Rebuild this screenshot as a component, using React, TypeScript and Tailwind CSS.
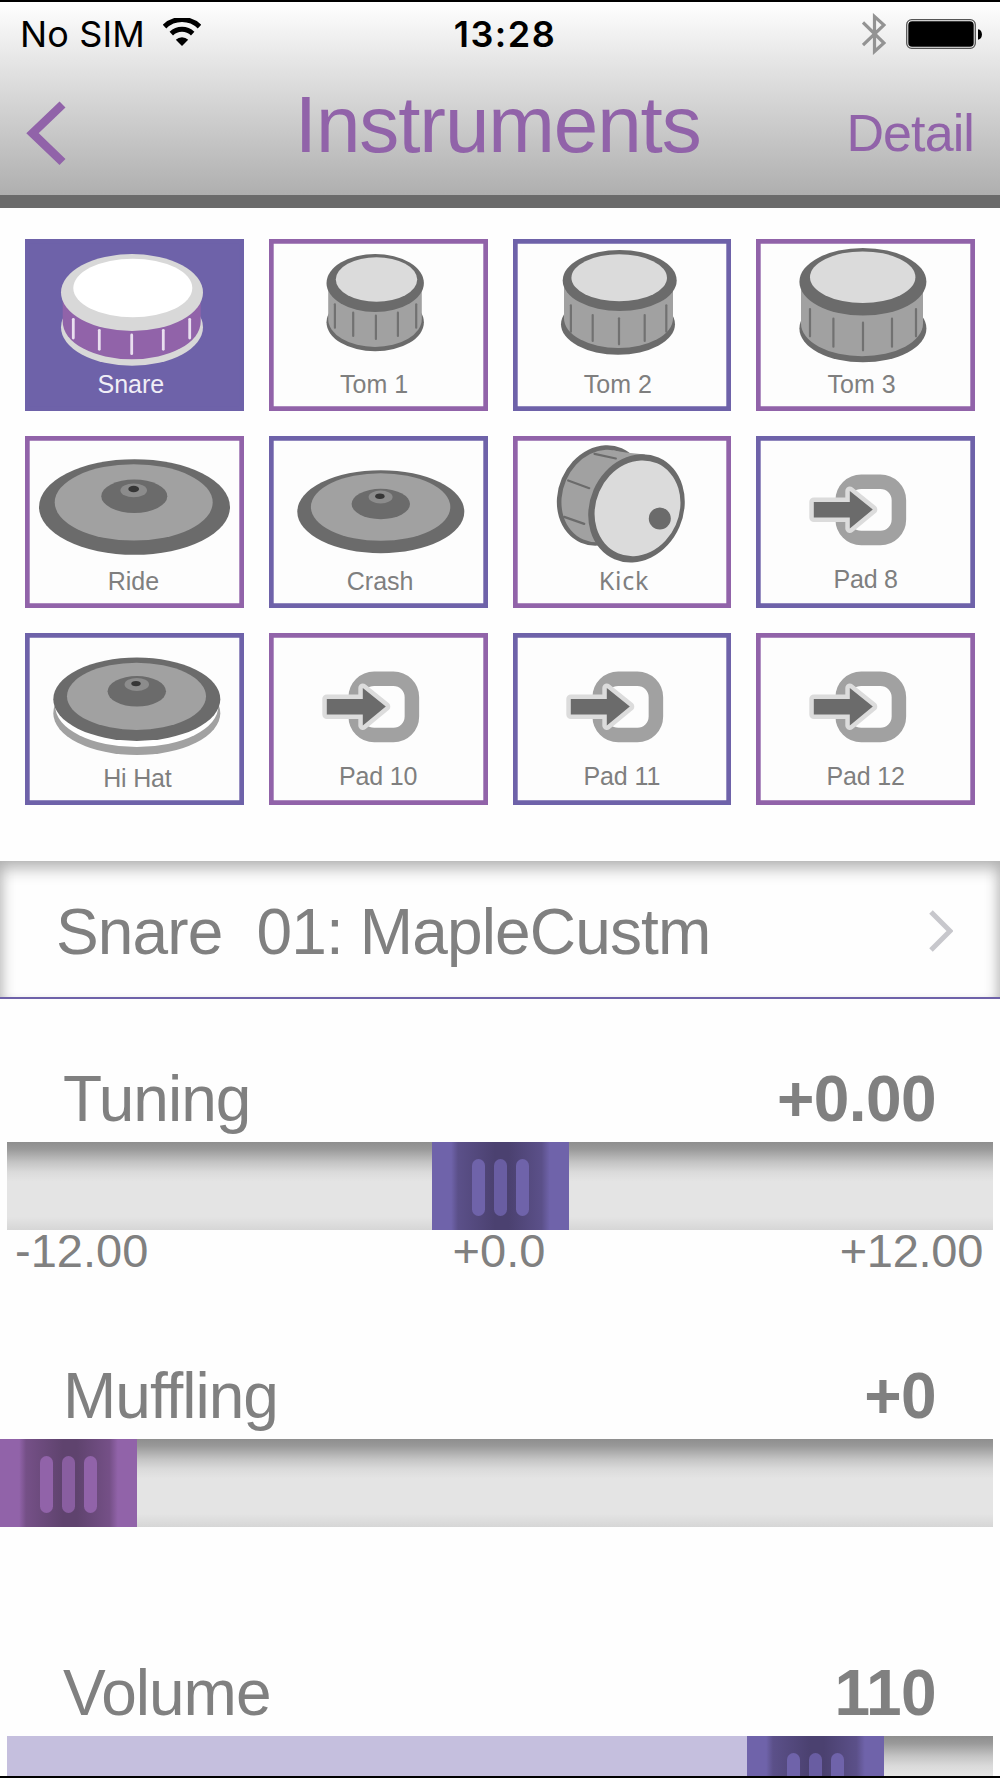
import clsx from "clsx";
import type { ReactNode } from "react";

type Ring = [cx: number, cy: number, rx: number, ry: number];

interface DrumProps {
	head: Ring;
	skin: Ring;
	foot: Ring;
	shell: [left: number, right: number, bottom: number];
	lugs: [x: number, y1: number, y2: number][];
	active?: boolean;
}

function Oval({ ring, fill }: { ring: Ring; fill: string }) {
	const [cx, cy, rx, ry] = ring;
	return <ellipse cx={cx} cy={cy} rx={rx} ry={ry} fill={fill} />;
}

function Drum({ head, skin, foot, shell, lugs, active }: DrumProps) {
	const [left, right, bottom] = shell;
	const rx = (right - left) / 2;
	const ry = head[3] - 1;
	const cy = bottom - ry;
	const rim = active ? "#d8d8d8" : "#6b6b6b";
	return (
		<>
			<Oval ring={foot} fill={rim} />
			<path
				d={`M${left} ${head[1]}V${cy}A${rx} ${ry} 0 0 0 ${right} ${cy}V${head[1]}Z`}
				fill={active ? "#9163a9" : "#a1a1a1"}
			/>
			{lugs.map(([x, y1, y2]) => (
				<path
					key={x}
					d={`M${x} ${y1 + 1}V${y2 - 1}`}
					stroke={active ? "#e9dfef" : "#717171"}
					strokeWidth={active ? 2.8 : 2.2}
					strokeLinecap="round"
				/>
			))}
			<Oval ring={head} fill={rim} />
			<Oval ring={skin} fill={active ? "#ffffff" : "#dbdbdb"} />
		</>
	);
}

function Cymbal({ rings }: { rings: Ring[] }) {
	const fills = ["#6b6b6b", "#a1a1a1", "#6b6b6b", "#8c8c8c", "#363636"];
	return (
		<>
			{rings.map((ring, i) => (
				<Oval key={fills[i] + i} ring={ring} fill={fills[i]} />
			))}
		</>
	);
}

function Kick() {
	return (
		<>
			<ellipse cx="88.3" cy="59.4" rx="43" ry="51.5" transform="rotate(23.5 88.3 59.4)" fill="#6b6b6b" />
			<ellipse cx="89.3" cy="60" rx="39.5" ry="47.5" transform="rotate(23.5 89.3 60)" fill="#a1a1a1" />
			<path d="M100 14.5L113 16.5L132 18.5L110 100L86 106Z" fill="#a1a1a1" />
			<path
				d="M81.5 17.9L102.8 22.5M55.2 44.5L76.2 52.2M51.2 80.9L71.2 87.9"
				stroke="#6b6b6b"
				strokeWidth="2.2"
				strokeLinecap="round"
			/>
			<ellipse cx="123.5" cy="72.4" rx="46.8" ry="55.4" transform="rotate(23.5 123.5 72.4)" fill="#6b6b6b" />
			<ellipse cx="124.5" cy="72.3" rx="41.7" ry="49" transform="rotate(23.5 124.5 72.3)" fill="#dbdbdb" />
			<circle cx="146.8" cy="82.5" r="11" fill="#6b6b6b" />
		</>
	);
}

function Pad() {
	const arrow = "M57.8 66H93.8V55L116.8 73.6L93.8 92.4V81.6H57.8Z";
	return (
		<>
			<rect x="86.7" y="45.8" width="56.2" height="56.2" rx="18.5" fill="none" stroke="#a1a1a1" strokeWidth="14.5" />
			<path d={arrow} fill="#dcdcdc" stroke="#dcdcdc" strokeWidth="9" strokeLinejoin="round" />
			<path d={arrow} fill="#6b6b6b" />
		</>
	);
}

const instruments: { name: string; label: string; art: ReactNode }[] = [
	{
		name: "Snare",
		label: "pr-[7px]",
		art: (
			<Drum
				active
				head={[107, 53.5, 71, 38.5]}
				skin={[107.8, 49, 59.5, 29.3]}
				foot={[107, 88.2, 71, 38.5]}
				shell={[37.7, 175.7, 120.3]}
				lugs={[
					[48.3, 79.3, 100],
					[74.3, 90.3, 111.3],
					[106.7, 95, 115.7],
					[138.3, 90.3, 111.3],
					[164.7, 79.3, 100],
				]}
			/>
		),
	},
	{
		name: "Tom 1",
		label: "pr-[8px]",
		art: (
			<Drum
				head={[106.2, 44, 48.7, 29]}
				skin={[107.5, 40.5, 40.7, 22.2]}
				foot={[106.2, 83.3, 48.7, 29]}
				shell={[59.2, 152.8, 108]}
				lugs={[
					[65.9, 64.3, 89.7],
					[84.2, 72.7, 98],
					[106.9, 75.7, 101],
					[128.9, 72.7, 98],
					[147.2, 64.3, 89.7],
				]}
			/>
		),
	},
	{
		name: "Tom 2",
		label: "pr-[8px]",
		art: (
			<Drum
				head={[106.7, 41.5, 57, 30.5]}
				skin={[106.2, 38.8, 47.8, 23.5]}
				foot={[105, 85.2, 57, 30.5]}
				shell={[51, 160, 109]}
				lugs={[
					[57.9, 65.3, 93.7],
					[79.7, 75, 103],
					[106, 78.3, 106.3],
					[131.7, 75, 103],
					[153.3, 65.3, 93.7],
				]}
			/>
		),
	},
	{
		name: "Tom 3",
		label: "pr-[8px]",
		art: (
			<Drum
				head={[106.9, 42.8, 63.5, 33.8]}
				skin={[106.7, 38.2, 52.7, 25.8]}
				foot={[106.9, 89.5, 63.5, 33.8]}
				shell={[45, 167, 117.3]}
				lugs={[
					[54, 69, 98.3],
					[77.4, 78.7, 108.7],
					[107, 82.7, 112.3],
					[136, 78.7, 108.7],
					[160, 69, 98.3],
				]}
			/>
		),
	},
	{
		name: "Ride",
		label: "pr-[2px]",
		art: (
			<Cymbal
				rings={[
					[109.5, 71, 95.5, 47.8],
					[108.7, 66.4, 79, 38.2],
					[109.3, 60.2, 33, 16.7],
					[108.7, 54.4, 13.3, 6.8],
					[108.7, 53, 5.4, 3.2],
				]}
			/>
		),
	},
	{
		name: "Crash",
		label: "pl-[4px]",
		art: (
			<Cymbal
				rings={[
					[111.8, 75.7, 83.5, 41.5],
					[111.6, 71, 69.7, 33.8],
					[111.8, 68, 29.2, 15.2],
					[111.6, 61, 12, 6.5],
					[110.9, 60.2, 4.7, 2.7],
				]}
			/>
		),
	},
	{
		name: "Kick",
		label: "-mt-[1px] pl-[4px] font-['Noto_Sans',sans-serif] tracking-[0.8px]",
		art: <Kick />,
	},
	{ name: "Pad 8", label: "-mt-[2px] tracking-[-0.2px]", art: <Pad /> },
	{
		name: "Hi Hat",
		label: "pl-[6px] tracking-[-0.2px]",
		art: (
			<>
				<Oval ring={[111.8, 80.2, 83.5, 41.8]} fill="#a1a1a1" />
				<Oval ring={[111.8, 73.5, 81.5, 40.5]} fill="#ffffff" />
				<Cymbal
					rings={[
						[111.8, 66.2, 83.5, 41.7],
						[111.5, 63.3, 69.5, 33.6],
						[111.8, 58.3, 29.2, 15.3],
						[111.8, 51.4, 12.2, 6.5],
						[111, 50.6, 4.7, 2.7],
					]}
				/>
			</>
		),
	},
	{ name: "Pad 10", label: "-mt-[2px] tracking-[-0.2px]", art: <Pad /> },
	{ name: "Pad 11", label: "-mt-[2px] tracking-[-0.1px]", art: <Pad /> },
	{ name: "Pad 12", label: "-mt-[2px] tracking-[-0.2px]", art: <Pad /> },
];

function Tile({ index, selected }: { index: number; selected: boolean }) {
	const { name, label, art } = instruments[index];
	// border colours alternate like a checkerboard
	const violet = (index + Math.floor(index / 4)) % 2 === 0;
	return (
		<button
			type="button"
			className={clsx(
				"flex flex-col",
				selected ? "bg-[#6e62a9]" : "bg-[#fdfdfd]",
				violet
					? "shadow-[inset_0_0_0_4.7px_#6e62a9]"
					: "shadow-[inset_0_0_0_4.7px_#9163a9]",
			)}
		>
			<svg viewBox="0 0 218.75 130" className="h-[130px] w-full shrink-0">
				{art}
			</svg>
			<span
				className={clsx(
					"w-full text-center text-[25px] leading-[31px]",
					selected ? "text-[#f0eef6]" : "text-[#7f7f7f]",
					label,
				)}
			>
				{name}
			</span>
		</button>
	);
}

function Header() {
	return (
		<header className="h-[208px] border-t-2 border-b-[13px] border-t-black border-b-[#6b6b6b] bg-linear-to-b from-white via-[#d6d6d6] via-50% to-[#afafaf]">
			<div className="grid h-[64px] grid-cols-3 items-center pr-[17px] pl-[20px] font-[Inter,sans-serif] text-[36px] text-black">
				<div className="flex items-center gap-[18px]">
					<span className="tracking-[0.15px]">No SIM</span>
					<svg viewBox="0 0 38 28" className="mb-[4px] h-[28px] w-[38px]" fill="none" stroke="#000">
						<path d="M1.5 8.6A25 25 0 0 1 36.5 8.6" strokeWidth="5" />
						<path d="M8.3 15.6A15.6 15.6 0 0 1 29.7 15.6" strokeWidth="5" />
						<path d="M19 28L12.8 21.8A8.8 8.8 0 0 1 25.2 21.8Z" fill="#000" stroke="none" />
					</svg>
				</div>
				<span className="pl-[7px] text-center font-semibold tracking-[1.5px]">13:28</span>
				<div className="flex items-center justify-end">
					<svg viewBox="0 0 24 42" className="mr-[20px] h-[42px] w-[24px]" fill="none" stroke="#939393" strokeWidth="3.2">
						<path d="M1 9.5L22 30L12.5 38.5V3.5L22 12L1 32" />
					</svg>
					<svg viewBox="0 0 77 30" className="h-[30px] w-[77px]">
						<rect x="0.7" y="0.7" width="68.6" height="28.6" rx="5" fill="none" stroke="#555" strokeWidth="1.3" />
						<rect x="2.3" y="2.3" width="65.4" height="25.4" rx="3.8" fill="#000" />
						<path d="M72 10.3C77.3 11 77.3 20 72 20.7Z" fill="#000" />
					</svg>
				</div>
			</div>
			<div className="flex h-[129px] items-start justify-between pr-[26px] pl-[26px] text-[#9163a9]">
				<svg viewBox="0 0 40 66" className="mt-[34px] mr-[83px] h-[66px] w-[40px]">
					<path d="M36.5 4.5L6.5 33.2L36.5 62" fill="none" stroke="currentColor" strokeWidth="8.6" />
				</svg>
				<h1 className="text-[80px] leading-[118px] tracking-[-1.1px]">Instruments</h1>
				<button type="button" className="text-[52px] leading-[135px] tracking-[-0.9px]">
					Detail
				</button>
			</div>
		</header>
	);
}

interface SliderProps {
	name: string;
	value: string;
	thumb: number;
	filled?: boolean;
	violet?: boolean;
	scale?: string[];
}

function Slider({ name, value, thumb, filled, violet, scale }: SliderProps) {
	return (
		<section className="h-[297px] shrink-0">
			<div className="flex justify-between pt-[58px] pr-[64px] pl-[63px] text-[64px] leading-[85px]">
				<span className="tracking-[-1px]">{name}</span>
				<span className="text-[64px] leading-[84px] font-bold tracking-[-0.6px]">{value}</span>
			</div>
			<div className="relative mx-[7px] h-[88px] bg-[linear-gradient(#8e8e8e,#999_8%,#c4c4c4_23%,#dadada_34%,#e4e4e4_45%,#e4e4e4_85%,#d6d6d6)]">
				{filled && (
					<div className="h-full bg-[#c5bfde]" style={{ width: thumb }} />
				)}
				<div
					className={clsx(
						"absolute top-0 flex h-full w-[137px] items-center justify-center gap-[9px]",
						violet
							? "bg-[linear-gradient(90deg,#6f63aa_14%,#5b5089_19%,#4b4170_46%,#4b4170_56%,#5b5089_80%,#6f63aa_86%)]"
							: "bg-[linear-gradient(90deg,#9163a9_14%,#755087_19%,#5f436e_46%,#5f436e_56%,#755087_80%,#9163a9_86%)]",
					)}
					style={{ left: thumb }}
				>
					{[0, 1, 2].map((i) => (
						<i
							key={i}
							className={clsx(
								"mt-[3px] h-[57px] w-[13px] rounded-full",
								violet ? "bg-[#6f63aa]" : "bg-[#9163a9]",
								i === 1 && "opacity-85",
							)}
						/>
					))}
				</div>
			</div>
			{scale && (
				<div className="grid grid-cols-3 pr-[17px] pl-[15px] text-[47px] leading-[42px]">
					<span>{scale[0]}</span>
					<span className="text-center">{scale[1]}</span>
					<span className="text-right tracking-[-0.3px]">{scale[2]}</span>
				</div>
			)}
		</section>
	);
}

export default function App() {
	return (
		<main className="flex h-[1778px] w-[1000px] flex-col overflow-hidden border-b-2 border-black bg-[#fefefe] font-['Liberation_Sans',Arial,sans-serif] text-[#808080]">
			<Header />
			<div className="grid h-[653px] shrink-0 auto-rows-[171.875px] grid-cols-4 gap-[25px] px-[25px] pt-[31px]">
				{instruments.map((item, i) => (
					<Tile key={item.name} index={i} selected={i === 0} />
				))}
			</div>
			<button
				type="button"
				className="flex h-[138px] shrink-0 items-start justify-between border-b-[2.5px] border-[#6e62a9] bg-[#fefefe] pr-[47px] pl-[56px] shadow-[inset_0_17px_16px_-10px_#b0b0b0,inset_12px_0_14px_-10px_#b8b8b8,inset_-12px_0_14px_-10px_#b8b8b8]"
			>
				<span className="text-[64px] leading-[142px] tracking-[-0.85px] whitespace-pre">
					Snare  01: MapleCustm
				</span>
				<svg viewBox="0 0 24 42" className="mt-[49px] h-[42px] w-[24px]">
					<path d="M2 2L21 21L2 40" fill="none" stroke="#c7c7cc" strokeWidth="5" />
				</svg>
			</button>
			<Slider name="Tuning" value="+0.00" thumb={425} violet scale={["-12.00", "+0.0", "+12.00"]} />
			<Slider name="Muffling" value="+0" thumb={-7} />
			<Slider name="Volume" value="110" thumb={740} filled violet />
		</main>
	);
}
